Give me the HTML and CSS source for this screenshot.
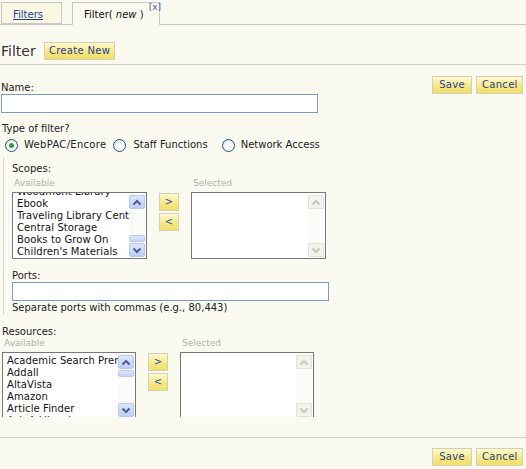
FILE: index.html
```html
<!DOCTYPE html>
<html>
<head>
<meta charset="utf-8">
<link rel="stylesheet" href="styles.css">
</head>
<body>
<div class="tabs">
  <div class="tab"><a href="#" class="tab-link">Filters</a></div>
  <div class="tab active">Filter( <i>new</i> )<a href="#" class="close">[x]</a></div>
</div>

<div class="header">
  <span class="title">Filter</span>
  <button class="ybtn create">Create New</button>
</div>
<div class="rule"></div>

<div class="actions top-actions">
  <button class="ybtn act">Save</button>
  <button class="ybtn act">Cancel</button>
</div>

<div class="label name-label">Name:</div>
<div class="textinput name-input"></div>

<div class="label type-label">Type of filter?</div>
<div class="radios">
  <span class="radio checked"></span><span class="rlabel r1">WebPAC/Encore</span>
  <span class="radio"></span><span class="rlabel r2">Staff Functions</span>
  <span class="radio"></span><span class="rlabel r3">Network Access</span>
</div>

<div class="fieldset">
  <div class="label scopes-label">Scopes:</div>
  <div class="picker scopes">
    <div class="col">
      <div class="sub">Available</div>
      <div class="listbox lb-a1">
        <div class="viewport">
          <ul class="items offset">
            <li>Woodmont Library</li>
            <li>Ebook</li>
            <li>Traveling Library Center</li>
            <li>Central Storage</li>
            <li>Books to Grow On</li>
            <li>Children's Materials</li>
          </ul>
        </div>
        <div class="sb">
          <span class="sbtn"><svg width="16" height="13" viewBox="0 0 16 13"><polyline points="4.5,8.5 8,5 11.5,8.5" fill="none" stroke="#4d6185" stroke-width="2"/></svg></span>
          <span class="track"><span class="thumb thumb-low"></span></span>
          <span class="sbtn"><svg width="16" height="13" viewBox="0 0 16 13"><polyline points="4.5,4.5 8,8 11.5,4.5" fill="none" stroke="#4d6185" stroke-width="2"/></svg></span>
        </div>
      </div>
    </div>
    <div class="movers">
      <button class="ybtn mv">&gt;</button>
      <button class="ybtn mv">&lt;</button>
    </div>
    <div class="col">
      <div class="sub">Selected</div>
      <div class="listbox lb-s1">
        <div class="viewport"></div>
        <div class="sb disabled">
          <span class="sbtn"><svg width="16" height="13" viewBox="0 0 16 13"><polyline points="4.5,8.5 8,5 11.5,8.5" fill="none" stroke="#c9c7ba" stroke-width="2"/></svg></span>
          <span class="track"></span>
          <span class="sbtn"><svg width="16" height="13" viewBox="0 0 16 13"><polyline points="4.5,4.5 8,8 11.5,4.5" fill="none" stroke="#c9c7ba" stroke-width="2"/></svg></span>
        </div>
      </div>
    </div>
  </div>
  <div class="label ports-label">Ports:</div>
  <div class="textinput ports-input"></div>
  <div class="label hint">Separate ports with commas (e.g., 80,443)</div>
</div>

<div class="label res-label">Resources:</div>
<div class="picker resources">
  <div class="col">
    <div class="sub">Available</div>
    <div class="clip">
      <div class="listbox lb-a2">
        <div class="viewport">
          <ul class="items pad">
            <li>Academic Search Premier</li>
            <li>Addall</li>
            <li>AltaVista</li>
            <li>Amazon</li>
            <li>Article Finder</li>
            <li>Ask A Librarian</li>
          </ul>
        </div>
        <div class="sb">
          <span class="sbtn"><svg width="16" height="13" viewBox="0 0 16 13"><polyline points="4.5,8.5 8,5 11.5,8.5" fill="none" stroke="#4d6185" stroke-width="2"/></svg></span>
          <span class="track"><span class="thumb thumb-high"></span></span>
          <span class="sbtn"><svg width="16" height="13" viewBox="0 0 16 13"><polyline points="4.5,4.5 8,8 11.5,4.5" fill="none" stroke="#4d6185" stroke-width="2"/></svg></span>
        </div>
      </div>
    </div>
  </div>
  <div class="movers">
    <button class="ybtn mv">&gt;</button>
    <button class="ybtn mv">&lt;</button>
  </div>
  <div class="col">
    <div class="sub">Selected</div>
    <div class="clip">
      <div class="listbox lb-s2">
        <div class="viewport"></div>
        <div class="sb disabled">
          <span class="sbtn"><svg width="16" height="13" viewBox="0 0 16 13"><polyline points="4.5,8.5 8,5 11.5,8.5" fill="none" stroke="#c9c7ba" stroke-width="2"/></svg></span>
          <span class="track"></span>
          <span class="sbtn"><svg width="16" height="13" viewBox="0 0 16 13"><polyline points="4.5,4.5 8,8 11.5,4.5" fill="none" stroke="#c9c7ba" stroke-width="2"/></svg></span>
        </div>
      </div>
    </div>
  </div>
</div>

<div class="rule bottom-rule"></div>
<div class="actions bottom-actions">
  <button class="ybtn act">Save</button>
  <button class="ybtn act">Cancel</button>
</div>
</body>
</html>
```

FILE: styles.css
```css
html, body {
  margin: 0;
  padding: 0;
}
body {
  background: #fbfaf1;
  font-family: "DejaVu Sans", Verdana, sans-serif;
  font-size: 10px;
  line-height: 12px;
  color: #222;
  width: 526px;
  height: 469px;
  overflow: hidden;
}

/* tabs */
.tabs {
  display: flex;
  gap: 10px;
  height: 22px;
  margin-top: 2px;
  padding-left: 1px;
  border-bottom: 1px solid #c8c8c8;
}
.tab {
  position: relative;
  box-sizing: border-box;
  height: 22px;
  border: 1px solid #c8c8c8;
  padding: 6px 0 0 11px;
  font-size: 10px;
  line-height: 12px;
}
.tab:first-child {
  width: 61px;
  background: #faf7e2;
}
.tab.active {
  width: 88px;
  height: 23px;
  border-bottom: none;
  background: #fbfaf1;
  color: #111;
}
.tab.active i {
  font-style: italic;
}
.tab-link {
  color: #1f3f9a;
  text-decoration: underline;
}
.close {
  position: absolute;
  right: -2px;
  top: -1px;
  font-size: 9px;
  line-height: 10px;
  color: #4060b0;
  text-decoration: none;
}

/* header */
.header {
  display: flex;
  align-items: center;
  margin-top: 17px;
  padding-left: 1px;
  height: 18px;
}
.title {
  font-size: 14px;
  line-height: 18px;
  color: #333;
  width: 43px;
}
.ybtn {
  box-sizing: border-box;
  margin: 0;
  padding: 0;
  border: 1px solid #d4d0b8;
  background: linear-gradient(#fffbd0, #f5e780 60%, #f0df6a);
  color: #2a3f8f;
  font-family: "DejaVu Sans", Verdana, sans-serif;
  font-size: 10px;
  line-height: 14px;
  letter-spacing: 0.3px;
  cursor: pointer;
}
.create {
  width: 71px;
  height: 18px;
}
.rule {
  border-top: 1px solid #cfcfcf;
  margin-top: 4px;
}

/* actions */
.actions {
  display: flex;
  gap: 4px;
  justify-content: flex-end;
  margin-right: 3px;
}
.top-actions {
  float: right;
  margin-top: 11px;
}
.act {
  height: 18px;
  padding: 0 5px;
}
.act:first-child {
  width: 40px;
}
.act:last-child {
  width: 47px;
}
.bottom-rule {
  margin-top: 20px;
}
.bottom-actions {
  margin-top: 10px;
}

/* labels & inputs */
.label {
  color: #222;
  font-size: 10px;
  line-height: 12px;
}
.name-label {
  margin-top: 17px;
  padding-left: 1px;
}
.textinput {
  box-sizing: border-box;
  border: 1px solid #7b9bc6;
  background: #fff;
}
.name-input {
  width: 317px;
  height: 19px;
  margin-left: 1px;
}
.type-label {
  margin-top: 10px;
  padding-left: 2px;
}

/* radios */
.radios {
  display: flex;
  align-items: center;
  height: 14px;
  margin-top: 3px;
  padding-left: 5px;
}
.radio {
  box-sizing: border-box;
  width: 13px;
  height: 13px;
  border-radius: 50%;
  border: 1px solid #1c5180;
  background: radial-gradient(circle at 65% 65%, #ffffff 30%, #dcdcd7);
  position: relative;
  flex: none;
}
.radio.checked::after {
  content: "";
  position: absolute;
  left: 3px;
  top: 3px;
  width: 5px;
  height: 5px;
  border-radius: 50%;
  background: #2ea52e;
}
.rlabel {
  margin-left: 6px;
}
.r1 { margin-right: 7px; letter-spacing: 0.3px; }
.r2 { margin-left: 7px; margin-right: 14px; }
.r3 { margin-left: 6px; }

/* fieldset */
.fieldset {
  margin-top: 5px;
  margin-left: 3px;
  border-left: 1px solid #d2d2d2;
  padding: 6px 0 1px 8px;
}

.picker {
  display: flex;
  margin-top: 3px;
}
.col {
  display: flex;
  flex-direction: column;
}
.sub {
  font-size: 9px;
  line-height: 11px;
  color: #b0b0b0;
  padding-left: 2px;
  height: 14px;
}
.movers {
  display: flex;
  flex-direction: column;
  gap: 2px;
  padding-top: 15px;
  margin: 0 12px 0 12px;
}
.mv {
  width: 20px;
  height: 18px;
  line-height: 14px;
  color: #2a4fa8;
  font-size: 10px;
}

/* listboxes */
.listbox {
  box-sizing: border-box;
  display: flex;
  background: #fff;
  border: 1px solid #777;
  height: 67px;
  overflow: hidden;
}
.lb-a1 { width: 135px; }
.lb-s1 { width: 135px; }
.lb-a2 { width: 134px; }
.lb-s2 { width: 134px; }
.clip {
  height: 65px;
  overflow: hidden;
}
.viewport {
  flex: 1;
  overflow: hidden;
}
.items {
  list-style: none;
  margin: 0;
  padding: 0 0 0 4px;
  white-space: nowrap;
  font-size: 10px;
  line-height: 12px;
  color: #111;
  letter-spacing: 0.1px;
}
.items.offset {
  margin-top: -7px;
}
.items.pad {
  padding-top: 2px;
}
.sb {
  width: 17px;
  flex: none;
  display: flex;
  flex-direction: column;
  padding: 2px 0 1px;
  box-sizing: border-box;
  background: #fbfbf8;
}
.sbtn {
  box-sizing: border-box;
  display: block;
  width: 16px;
  height: 14px;
  border: 1px solid #b6c8ee;
  border-radius: 2px;
  background: linear-gradient(#dde7fd, #bccdf8);
}
.sbtn svg {
  display: block;
  margin: -0.5px 0 0 -1px;
}
.track {
  flex: 1;
  position: relative;
}
.thumb {
  position: absolute;
  left: 0;
  width: 16px;
  height: 7px;
  box-sizing: border-box;
  border: 1px solid #b6c8ee;
  border-radius: 2px;
  background: linear-gradient(#dde7fd, #c4d3f9);
}
.thumb-low { bottom: 1px; }
.thumb-high { top: 1px; }
.sb.disabled .sbtn {
  border-color: #e3e2da;
  background: #f4f3ee;
}

.ports-label {
  margin-top: 11px;
}
.ports-input {
  width: 317px;
  height: 19px;
  margin-top: 0;
}
.hint {
  margin-top: 1px;
}

.res-label {
  margin-top: 11px;
  padding-left: 2px;
}
.resources {
  margin-top: 0;
  padding-left: 2px;
}
```
